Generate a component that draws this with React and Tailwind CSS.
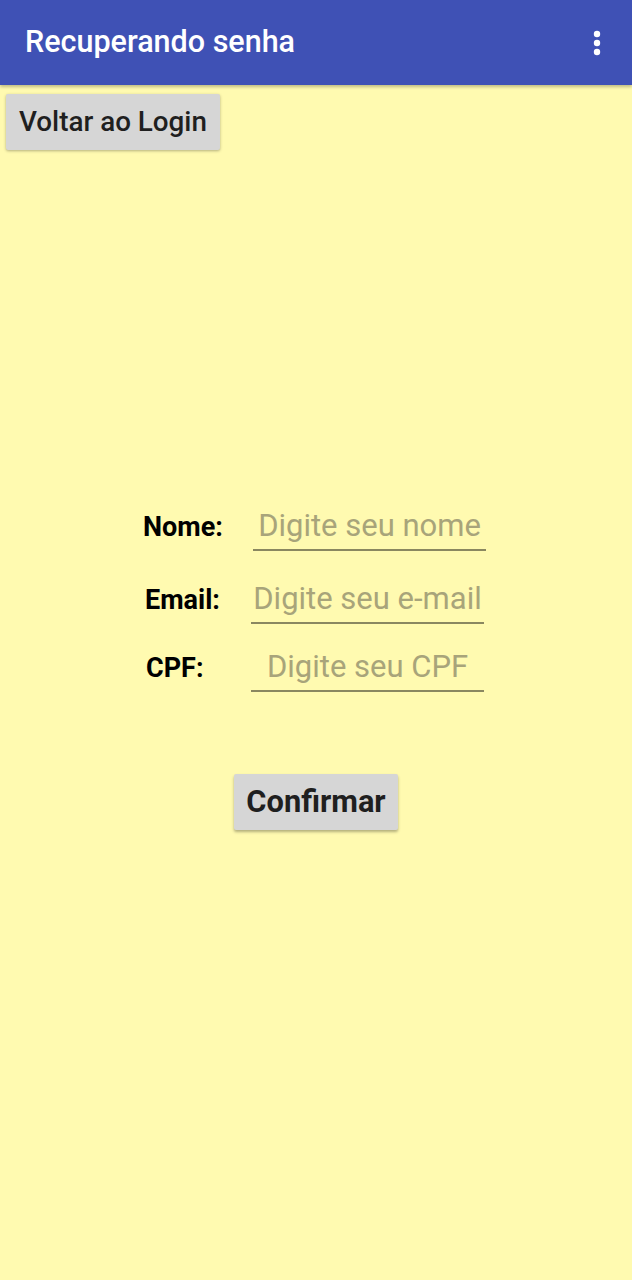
export default function App() {
  const fields = [
    { label: "Nome:", placeholder: "Digite seu nome", box: "w-[253px] pl-[143px]", gap: "" },
    { label: "Email:", placeholder: "Digite seu e-mail", box: "w-[251px] pl-[145px]", gap: "mt-[32px]" },
    { label: "CPF:", placeholder: "Digite seu CPF", box: "w-[251px] pl-[146px]", gap: "mt-[27px]" },
  ];

  return (
    <div className="w-[632px] h-[1280px] flex flex-col bg-[#fffab0]" style={{ fontFamily: "Roboto, 'Noto Sans', sans-serif" }}>
      <div className="h-[85px] bg-[#3f51b5] flex items-center justify-between pl-[25px] pr-[30px] shadow-[0_2px_3px_rgba(0,0,0,0.25)] shrink-0">
        <div className="text-white text-[30.5px] font-medium leading-none">Recuperando senha</div>
        <svg width="10" height="26" viewBox="0 0 10 26" className="fill-white">
          <circle cx="5" cy="4" r="3.2" />
          <circle cx="5" cy="13" r="3.2" />
          <circle cx="5" cy="22" r="3.2" />
        </svg>
      </div>

      <div className="pt-[9px] pl-[6px]">
        <button className="h-[56px] px-[13px] bg-[#d6d6d6] rounded-[2px] shadow-[0_1px_3px_rgba(0,0,0,0.3)] text-[27.8px] font-medium text-[#1f1f1f] leading-none">
          Voltar ao Login
        </button>
      </div>

      <div className="mt-[360px] flex flex-col">
        {fields.map((f) => (
          <div key={f.label} className={`flex items-end ${f.gap}`}>
            <div className={`${f.box} shrink-0 text-[27px] font-bold text-black leading-none pb-[10px]`}>{f.label}</div>
            <div className="w-[233px] border-b-2 border-[#8a8760] text-center text-[31px] text-[#a8a47a] leading-none pb-[8px] whitespace-nowrap">
              {f.placeholder}
            </div>
          </div>
        ))}
      </div>

      <div className="mt-[82px] flex justify-center">
        <button className="h-[56px] px-[12px] bg-[#d6d6d6] rounded-[2px] shadow-[0_2px_3px_rgba(0,0,0,0.3)] text-[30.8px] font-bold text-[#1f1f1f] leading-none">
          Confirmar
        </button>
      </div>
    </div>
  );
}
